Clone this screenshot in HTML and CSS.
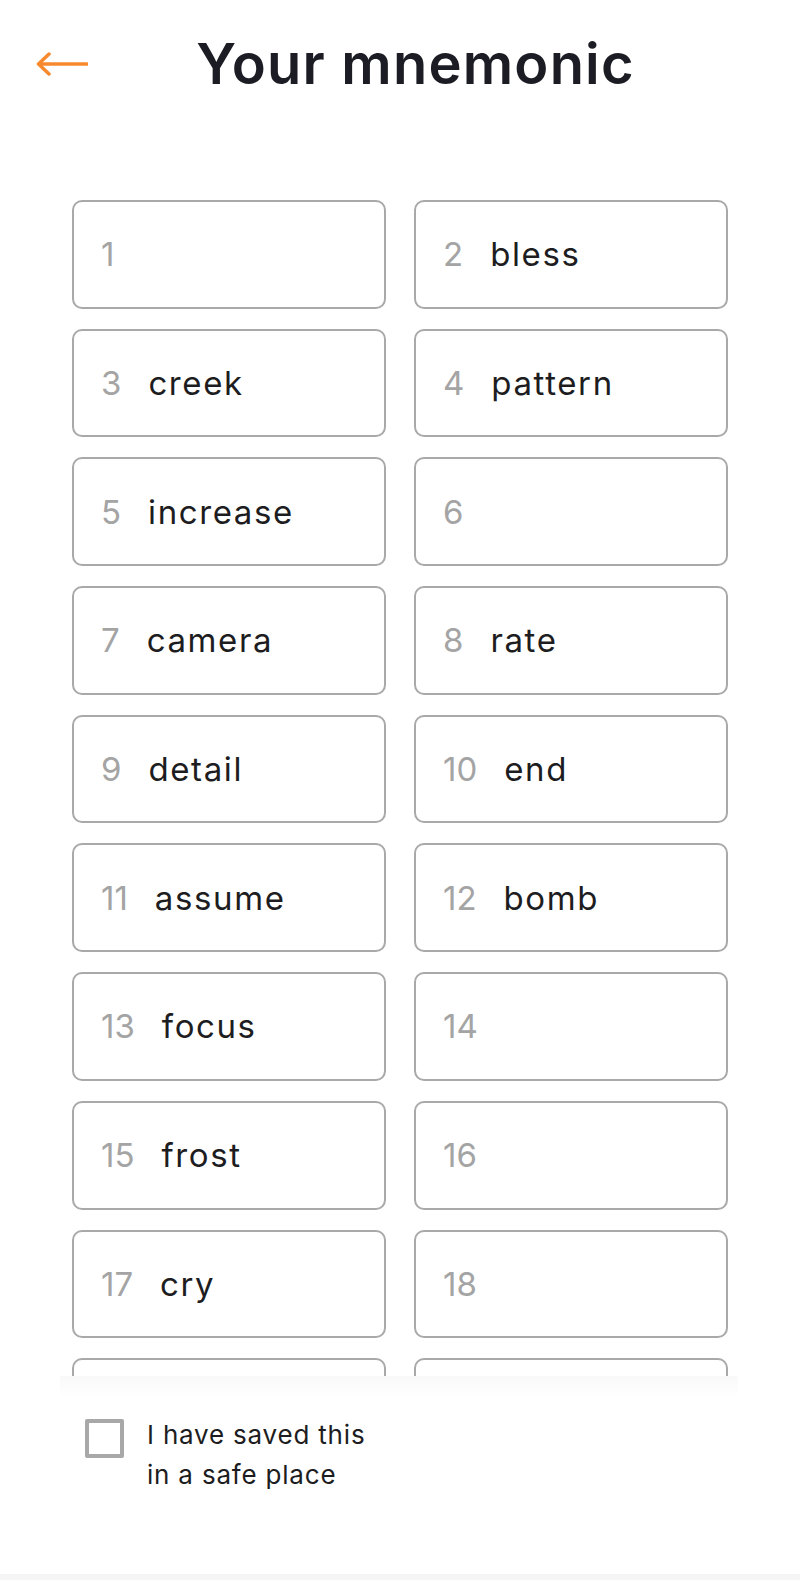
FILE: index.html
```html
<!DOCTYPE html>
<html lang="en">
<head>
  <meta charset="UTF-8">
  <meta name="viewport" content="width=device-width, initial-scale=1.0">
  <title>Your mnemonic</title>
  <link rel="stylesheet" href="styles.css">
</head>
<body>
  <div class="screen">
    <div class="header">
      <button class="back-btn" aria-label="Back">
        <svg width="52" height="24" viewBox="0 0 52 24" fill="none">
          <path d="M51 12H3M13 2L2.5 12L13 22" stroke="#f78a2e" stroke-width="3.5" stroke-linecap="round" stroke-linejoin="round"/>
        </svg>
      </button>
      <h1 class="title">Your mnemonic</h1>
    </div>

    <!-- Word list -->
    <div class="word-list">
      <div class="word-grid">
        <div class="word-card"><span class="word-num">1</span><span class="word"></span></div>
        <div class="word-card"><span class="word-num">2</span><span class="word">bless</span></div>
        <div class="word-card"><span class="word-num">3</span><span class="word">creek</span></div>
        <div class="word-card"><span class="word-num">4</span><span class="word">pattern</span></div>
        <div class="word-card"><span class="word-num">5</span><span class="word">increase</span></div>
        <div class="word-card"><span class="word-num">6</span><span class="word"></span></div>
        <div class="word-card"><span class="word-num">7</span><span class="word">camera</span></div>
        <div class="word-card"><span class="word-num">8</span><span class="word">rate</span></div>
        <div class="word-card"><span class="word-num">9</span><span class="word">detail</span></div>
        <div class="word-card"><span class="word-num">10</span><span class="word">end</span></div>
        <div class="word-card"><span class="word-num">11</span><span class="word">assume</span></div>
        <div class="word-card"><span class="word-num">12</span><span class="word">bomb</span></div>
        <div class="word-card"><span class="word-num">13</span><span class="word">focus</span></div>
        <div class="word-card"><span class="word-num">14</span><span class="word"></span></div>
        <div class="word-card"><span class="word-num">15</span><span class="word">frost</span></div>
        <div class="word-card"><span class="word-num">16</span><span class="word"></span></div>
        <div class="word-card"><span class="word-num">17</span><span class="word">cry</span></div>
        <div class="word-card"><span class="word-num">18</span><span class="word"></span></div>
        <div class="word-card"></div>
        <div class="word-card"></div>
      </div>
    </div>

    <div class="footer">
      <label class="confirm">
        <span class="checkbox"></span>
        <span class="confirm-text">I have saved this<br>in a safe place</span>
      </label>
    </div>
  </div>
  <div class="home-bar"></div>
</body>
</html>
```

FILE: styles.css
```css
body {
  margin: 0;
  padding: 0;
  height: 1580px;
  display: flex;
  flex-direction: column;
  background: #fff;
  font-family: 'Inter', 'Noto Sans', sans-serif;
  color: #1d1d21;
  overflow: hidden;
}

.screen {
  flex: 1;
  display: flex;
  flex-direction: column;
  min-height: 0;
}

.header {
  height: 70px;
  margin-top: 29px;
  padding: 0 57px 0 36px;
  display: flex;
  align-items: center;
}

.back-btn {
  width: 52px;
  height: 24px;
  padding: 0;
  border: none;
  background: none;
  display: flex;
  cursor: pointer;
}

.title {
  flex: 1;
  margin: 0;
  text-align: center;
  font-size: 56px;
  font-weight: 600;
  letter-spacing: 1.2px;
  color: #1c1c24;
}

.word-list {
  flex: 1;
  min-height: 0;
  overflow: hidden;
  margin-top: 101px;
  padding: 0 72px;
}

.word-grid {
  display: grid;
  grid-template-columns: 1fr 1fr;
  grid-auto-rows: 108.7px;
  column-gap: 28px;
  row-gap: 20px;
}

.word-card {
  display: flex;
  align-items: center;
  padding-left: 27px;
  border: 2px solid #a9a9a9;
  border-radius: 10px;
  box-sizing: border-box;
  font-size: 33px;
}

.word-num {
  color: #a4a4a4;
  margin-right: 27px;
}

.word {
  color: #1d1d21;
  letter-spacing: 1.6px;
}

.footer {
  height: 198px;
  flex-shrink: 0;
  box-sizing: border-box;
  padding: 39px 0 0 85px;
  position: relative;
  background: #fff;
}

.footer::before {
  content: "";
  position: absolute;
  top: 0;
  left: 60px;
  right: 62px;
  height: 22px;
  background: linear-gradient(to bottom, rgba(0, 0, 0, 0.025), rgba(0, 0, 0, 0));
}

.confirm {
  display: flex;
  align-items: flex-start;
  gap: 23px;
  cursor: pointer;
}

.checkbox {
  width: 39px;
  height: 39px;
  margin-top: 4px;
  box-sizing: border-box;
  border: 4px solid #a8a8a8;
  border-radius: 2px;
  flex-shrink: 0;
}

.confirm-text {
  font-size: 26px;
  line-height: 40px;
  letter-spacing: 0.8px;
  color: #1d1d21;
}

.home-bar {
  height: 6px;
  background: #f5f5f5;
}
```
